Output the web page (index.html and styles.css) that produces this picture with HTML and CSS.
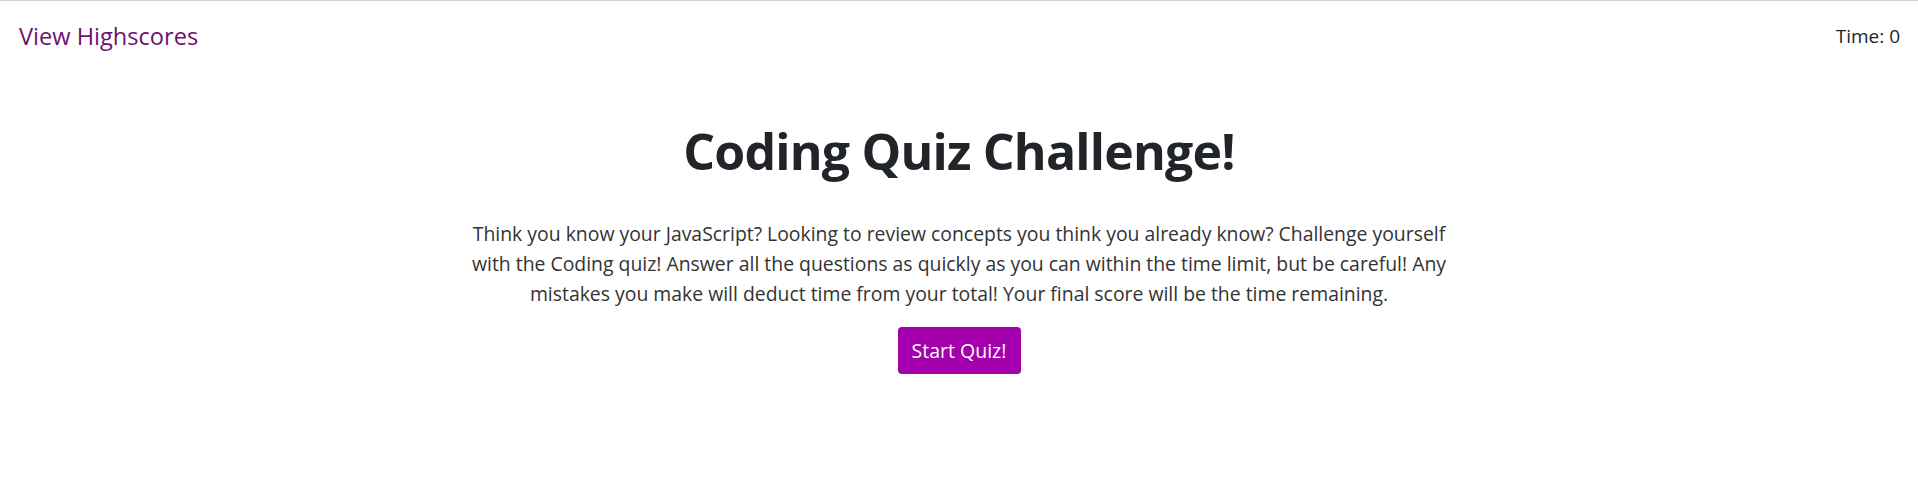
FILE: index.html
```html
<!DOCTYPE html>
<html lang="en">
<head>
<meta charset="utf-8">
<title>Coding Quiz</title>
<link rel="stylesheet" href="styles.css">
</head>
<body>
<header class="topbar">
  <a class="highscores" href="#">View Highscores</a>
  <div class="timer">Time: 0</div>
</header>
<main class="intro">
  <h1 class="title">Coding Quiz Challenge!</h1>
  <p class="lead">Think you know your JavaScript? Looking to review concepts you think you already know? Challenge yourself with the Coding quiz! Answer all the questions as quickly as you can within the time limit, but be careful! Any mistakes you make will deduct time from your total! Your final score will be the time remaining.</p>
  <button class="start">Start Quiz!</button>
</main>
</body>
</html>
```
FILE: styles.css
```css
* { box-sizing: border-box; }
html, body { margin: 0; padding: 0; }
body {
  font-family: "Open Sans", "Noto Sans", sans-serif;
  color: #212529;
  background: #fff;
  border-top: 1px solid #cfcfcf;
}
.topbar {
  display: flex;
  justify-content: space-between;
  align-items: center;
  padding: 14px 18px 0 19px;
  height: 56px;
}
.highscores {
  color: #6f116f;
  text-decoration: none;
  font-size: 23.6px;
}
.timer {
  font-size: 19px;
}
.intro {
  display: flex;
  flex-direction: column;
  align-items: center;
  text-align: center;
}
.title {
  margin: 64px 0 0;
  font-size: 50px;
  letter-spacing: -0.8px;
  font-weight: 700;
  line-height: 1.2;
}
.lead {
  margin: 38px 0 0;
  max-width: 1000px;
  font-size: 19.4px;
  line-height: 30px;
  color: #333;
}
.start {
  margin-top: 18px;
  font-family: inherit;
  font-size: 19.5px;
  color: #fff;
  background: #a400ad;
  border: none;
  border-radius: 4px;
  padding: 0 12px;
  height: 47px;
  width: 123px;
}
```
